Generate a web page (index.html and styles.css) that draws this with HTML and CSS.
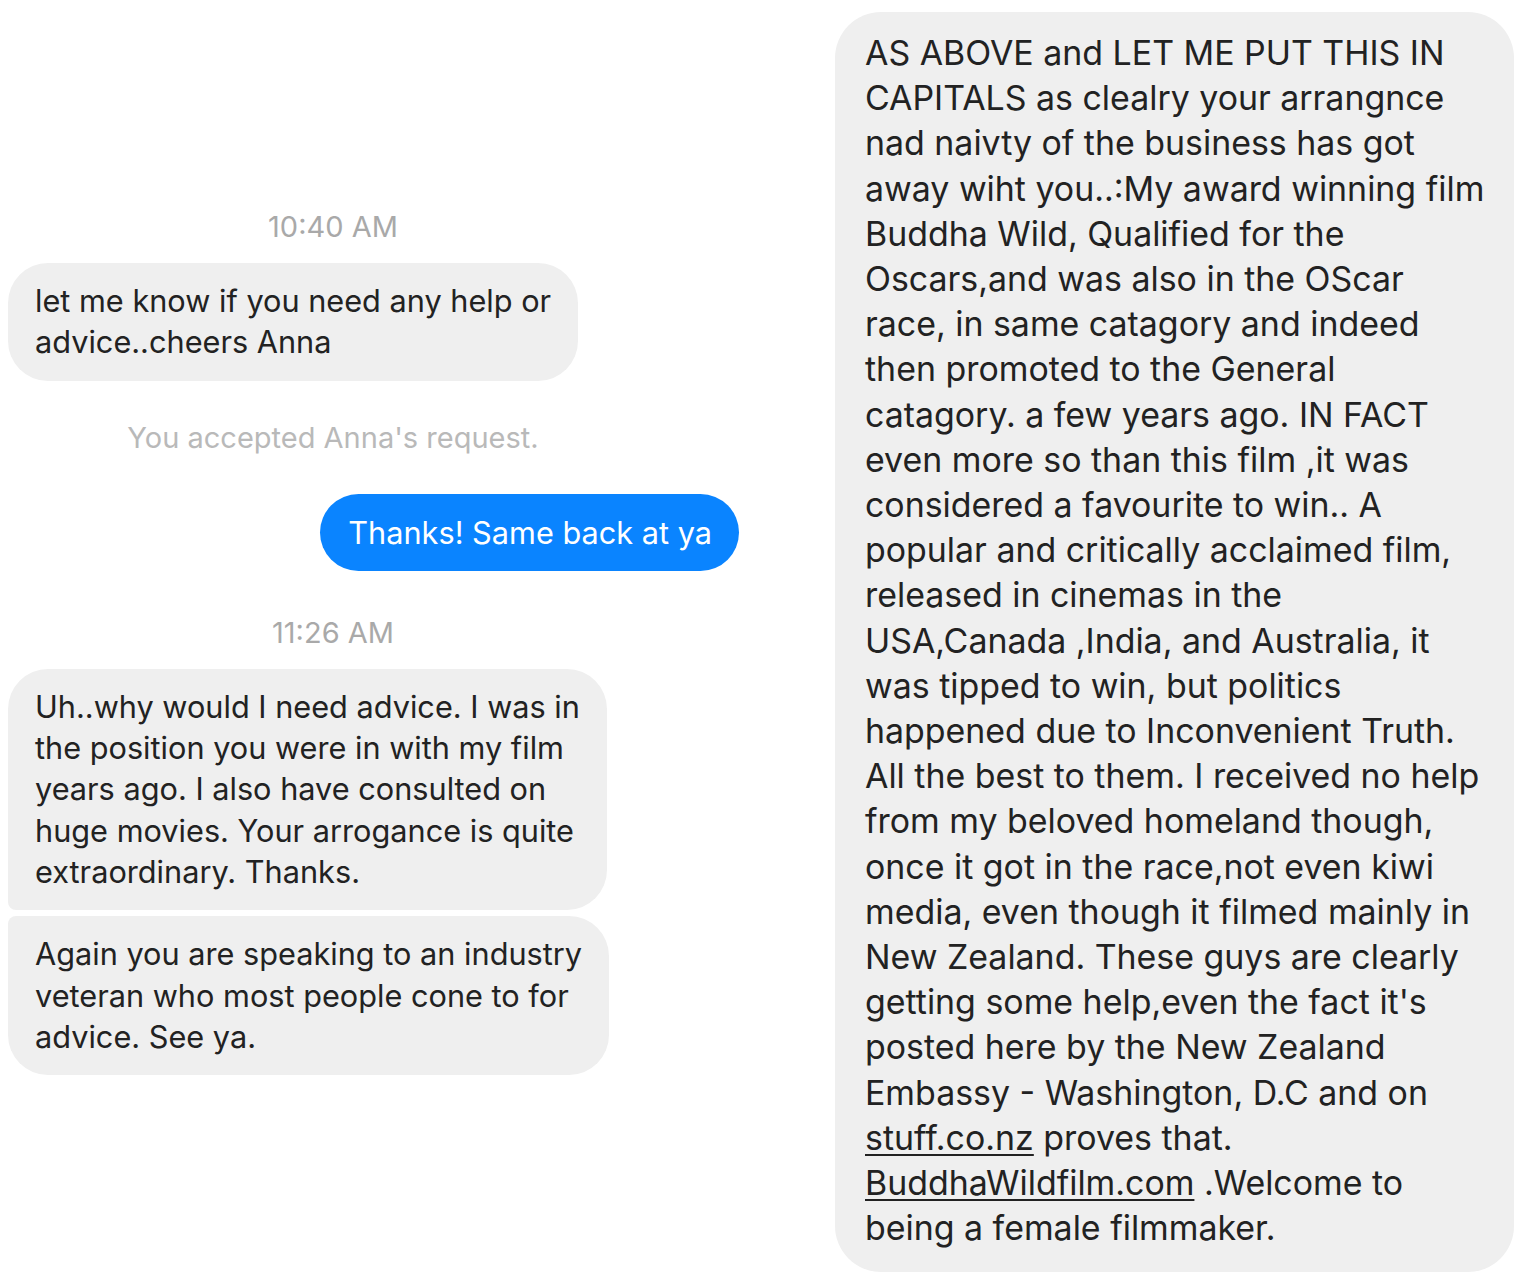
FILE: index.html
```html
<!DOCTYPE html>
<html lang="en">
<head>
<meta charset="utf-8">
<title>Messages</title>
<link rel="stylesheet" href="styles.css">
</head>
<body>
<div class="page">
  <section class="thread">
    <div class="meta time t1">10:40 AM</div>
    <div class="bubble in single">let me know if you need any help or<br>advice..cheers Anna</div>
    <div class="meta notice">You accepted Anna's request.</div>
    <div class="bubble out">Thanks! Same back at ya</div>
    <div class="meta time t2">11:26 AM</div>
    <div class="group">
      <div class="bubble in first">Uh..why would I need advice. I was in<br>the position you were in with my film<br>years ago. I also have consulted on<br>huge movies. Your arrogance is quite<br>extraordinary. Thanks.</div>
      <div class="bubble in last">Again you are speaking to an industry<br>veteran who most people cone to for<br>advice. See ya.</div>
    </div>
  </section>
  <section class="long">
    <div class="bubble big">AS ABOVE and LET ME PUT THIS IN<br>CAPITALS as clealry your arrangnce<br>nad naivty of the business has got<br>away wiht you..:My award winning film<br>Buddha Wild, Qualified for the<br>Oscars,and was also in the OScar<br>race, in same catagory and indeed<br>then promoted to the General<br>catagory. a few years ago. IN FACT<br>even more so than this film ,it was<br>considered a favourite to win.. A<br>popular and critically acclaimed film,<br>released in cinemas in the<br>USA,Canada ,India, and Australia, it<br>was tipped to win, but politics<br>happened due to Inconvenient Truth.<br>All the best to them. I received no help<br>from my beloved homeland though,<br>once it got in the race,not even kiwi<br>media, even though it filmed mainly in<br>New Zealand. These guys are clearly<br>getting some help,even the fact it's<br>posted here by the New Zealand<br>Embassy - Washington, D.C and on<br><span class="link">stuff.co.nz</span> proves that.<br><span class="link">BuddhaWildfilm.com</span> .Welcome to<br>being a female filmmaker.</div>
  </section>
</div>
</body>
</html>
```
FILE: styles.css
```css
html, body {
  margin: 0;
  background: #ffffff;
}
body {
  padding: 8px;
  font-family: Inter, "Liberation Sans", Arial, sans-serif;
  color: #222222;
}
.page {
  display: flex;
  align-items: flex-start;
  gap: 96px;
}
.thread {
  width: 731px;
  display: flex;
  flex-direction: column;
  align-items: flex-start;
}
.meta {
  width: 650px;
  text-align: center;
  font-size: 29px;
  line-height: 34px;
}
.time {
  color: #a9a9a9;
}
.t1 {
  margin-top: 202px;
}
.t2 {
  margin-top: 45px;
}
.notice {
  color: #b9b9b9;
  margin-top: 40px;
}
.bubble {
  font-size: 30.7px;
  line-height: 41.3px;
  padding: 17px 27px 18px 27px;
  background: #efefef;
  border-radius: 40px;
  white-space: nowrap;
}
.single {
  margin-top: 19px;
}
.out {
  align-self: flex-end;
  margin-top: 39px;
  background: #0a84ff;
  color: #ffffff;
  padding: 18px 27px 18px 28px;
}
.group {
  margin-top: 19px;
  display: flex;
  flex-direction: column;
  align-items: flex-start;
  gap: 6px;
}
.first {
  border-bottom-left-radius: 8px;
}
.last {
  border-top-left-radius: 8px;
}
.long {
  padding-top: 4px;
}
.big {
  font-size: 33.9px;
  line-height: 45.2px;
  padding: 18px 30px 22px 30px;
  border-radius: 46px;
}
.link {
  text-decoration: underline;
  text-underline-offset: 4px;
  text-decoration-thickness: 2px;
}
```
